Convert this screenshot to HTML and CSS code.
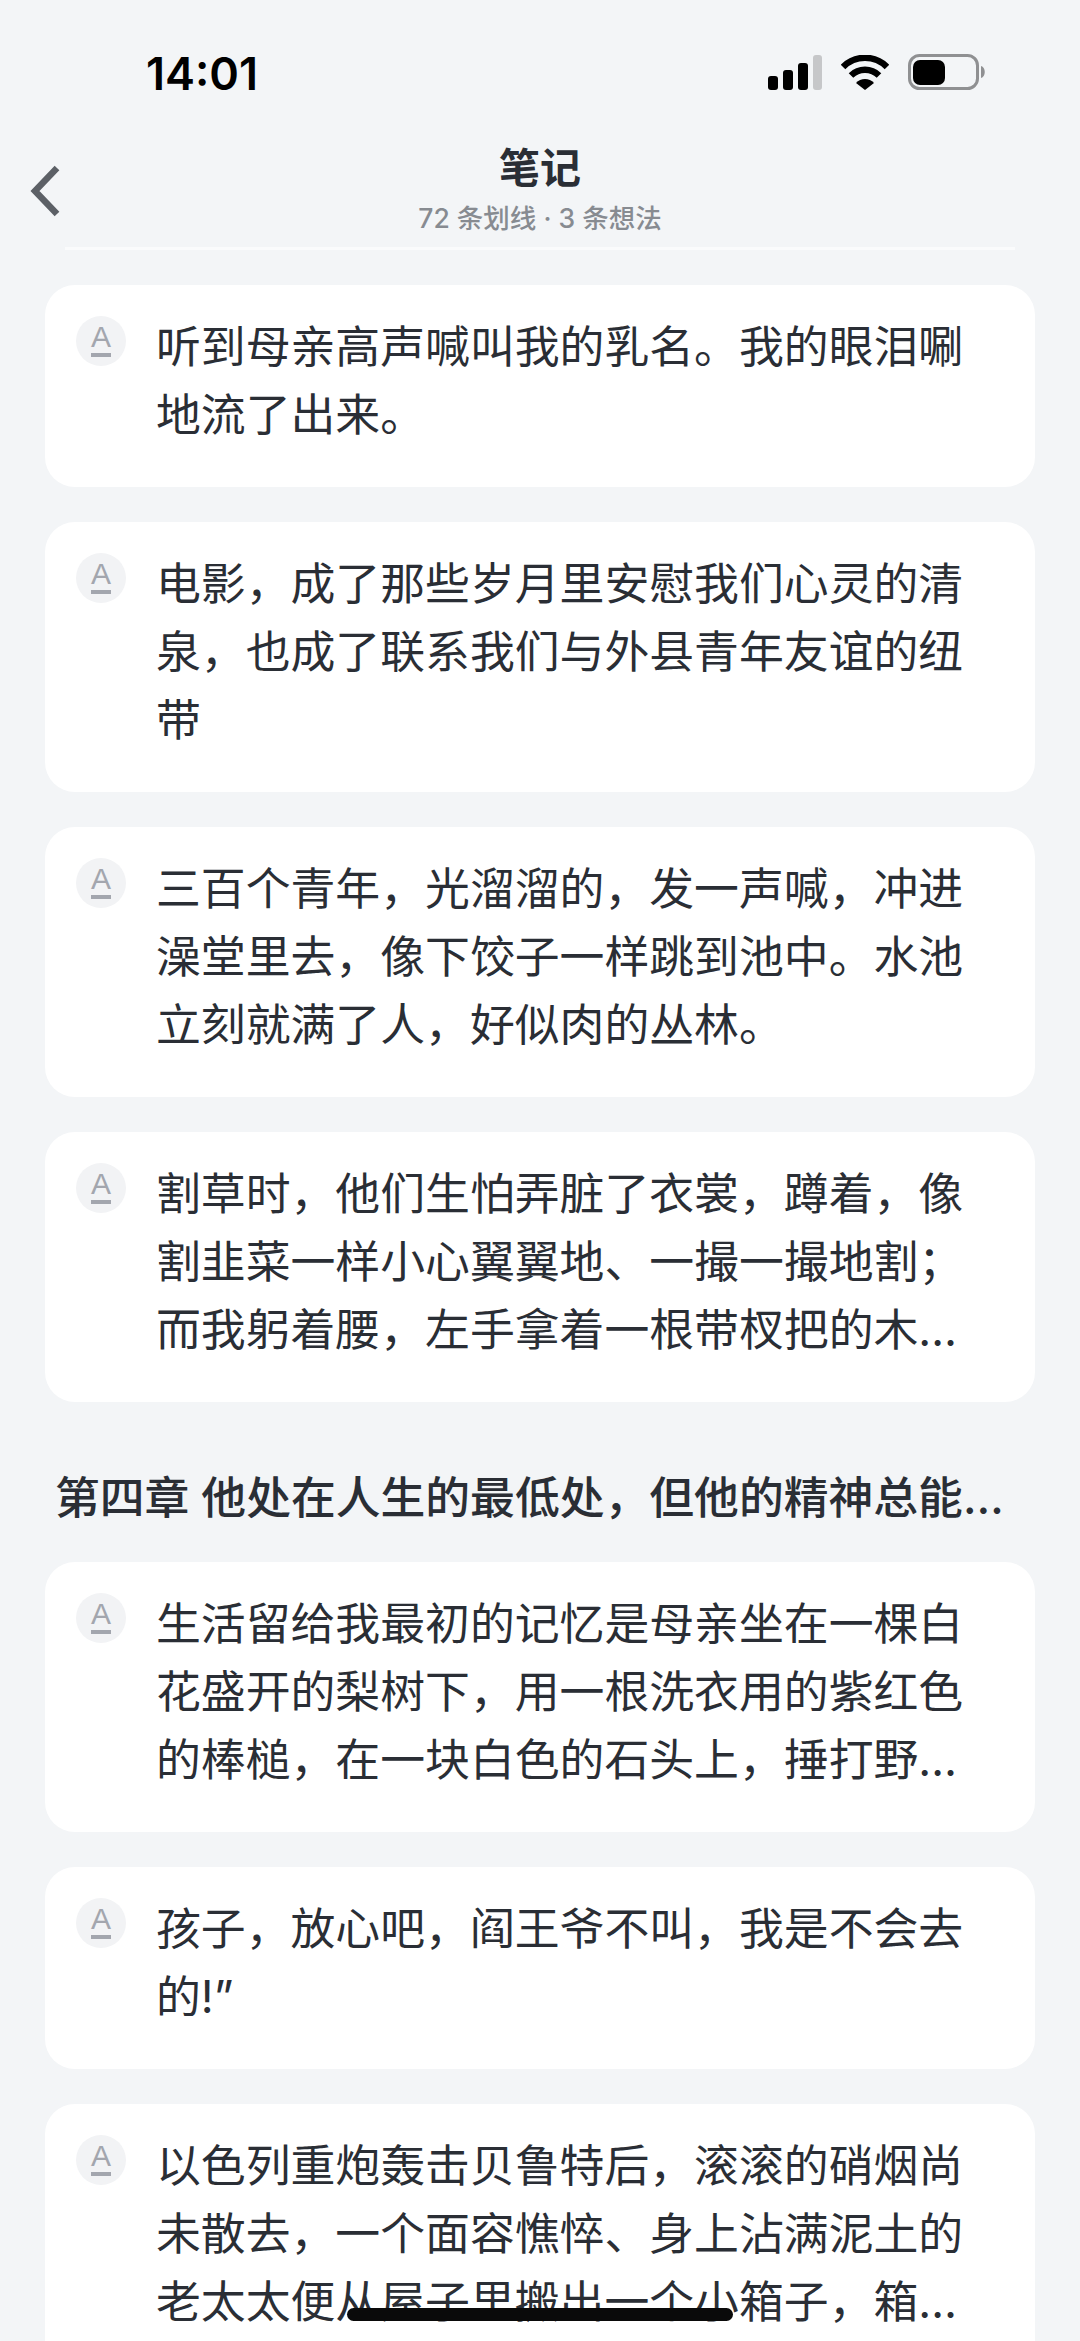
FILE: index.html
```html
<!DOCTYPE html>
<html lang="zh-CN">
<head>
    <meta charset="UTF-8">
    <title>笔记</title>
    <link rel="stylesheet" href="styles.css">
</head>

<body>

    <div class="status-bar">
        <span class="time">14:01</span>
        <div class="status-icons">
            <svg width="54" height="35" viewBox="0 0 54 35">
                <rect x="0" y="21" width="10" height="14" rx="3" fill="#000"/>
                <rect x="15" y="15" width="10" height="20" rx="3" fill="#000"/>
                <rect x="30" y="8" width="10" height="27" rx="3" fill="#000"/>
                <rect x="45" y="0" width="9" height="35" rx="3" fill="#c6c7c9"/>
            </svg>
            <svg width="48" height="35" viewBox="0 0 48 35">
                <path d="M2 12 A31 31 0 0 1 46 12" fill="none" stroke="#000" stroke-width="6.5"/>
                <path d="M10 20.5 A20 20 0 0 1 38 20.5" fill="none" stroke="#000" stroke-width="6.5"/>
                <path d="M15 28 A12 12 0 0 1 33 28 L24 35 Z" fill="#000"/>
            </svg>
            <svg width="78" height="36" viewBox="0 0 78 36">
                <rect x="1.5" y="1.5" width="68" height="33" rx="10" fill="none" stroke="#8f9092" stroke-width="3"/>
                <rect x="5" y="6" width="32" height="25" rx="7" fill="#000"/>
                <path d="M73 12 C78 13 78 23 73 24 Z" fill="#8f9092"/>
            </svg>
        </div>
    </div>

    <header class="nav-bar">
        <svg class="back" width="34" height="52" viewBox="0 0 34 52">
            <path d="M28 3 L6 26 L28 49" fill="none" stroke="#5c6066" stroke-width="6.5"/>
        </svg>
        <h1>笔记</h1>
        <p>72 条划线 · 3 条想法</p>
    </header>

    <main class="notes">
        <div class="note">
            <span class="mark">A</span>
            <p>听到母亲高声喊叫我的乳名。我的眼泪唰地流了出来。</p>
        </div>
        <div class="note">
            <span class="mark">A</span>
            <p>电影，成了那些岁月里安慰我们心灵的清泉，也成了联系我们与外县青年友谊的纽带</p>
        </div>
        <div class="note">
            <span class="mark">A</span>
            <p>三百个青年，光溜溜的，发一声喊，冲进澡堂里去，像下饺子一样跳到池中。水池立刻就满了人，好似肉的丛林。</p>
        </div>
        <div class="note">
            <span class="mark">A</span>
            <p>割草时，他们生怕弄脏了衣裳，蹲着，像割韭菜一样小心翼翼地、一撮一撮地割；而我躬着腰，左手拿着一根带杈把的木…</p>
        </div>

        <h2>第四章 他处在人生的最低处，但他的精神总能…</h2>

        <div class="note">
            <span class="mark">A</span>
            <p>生活留给我最初的记忆是母亲坐在一棵白花盛开的梨树下，用一根洗衣用的紫红色的棒槌，在一块白色的石头上，捶打野…</p>
        </div>
        <div class="note">
            <span class="mark">A</span>
            <p>孩子，放心吧，阎王爷不叫，我是不会去的!”</p>
        </div>
        <div class="note">
            <span class="mark">A</span>
            <p>以色列重炮轰击贝鲁特后，滚滚的硝烟尚未散去，一个面容憔悴、身上沾满泥土的老太太便从屋子里搬出一个小箱子，箱…</p>
        </div>
    </main>

    <div class="home-bar"></div>

</body>
</html>
```

FILE: styles.css
```css
html, body {
    margin: 0;
    padding: 0;
    height: 2341px;
    overflow: hidden;
}
body {
    background-color: #f3f5f7;
    font-family: Inter, "Noto Sans CJK SC", sans-serif;
    color: #2a2e35;
    position: relative;
}
.status-bar {
    height: 108px;
    padding: 46px 94px 0 146px;
    display: flex;
    justify-content: space-between;
    align-items: flex-start;
    box-sizing: border-box;
}
.time {
    font-size: 45px;
    font-weight: 600;
    line-height: 56px;
    color: #000;
}
.status-icons {
    display: flex;
    align-items: center;
    gap: 19px;
    padding-top: 8px;
}
.nav-bar {
    position: relative;
    margin: 0 65px;
    height: 139px;
    border-bottom: 3px solid #fafbfc;
    text-align: center;
}
.back {
    position: absolute;
    left: -36px;
    top: 57px;
}
.nav-bar h1 {
    margin: 0;
    padding-top: 36px;
    font-size: 41px;
    line-height: 48px;
    font-weight: 700;
    color: #2a2e35;
}
.nav-bar p {
    margin: 9px 0 0;
    font-size: 26.5px;
    line-height: 34px;
    font-weight: 500;
    color: #878b91;
}
.notes {
    padding: 35px 45px 0;
}
.note {
    display: flex;
    gap: 30px;
    background-color: #fff;
    border-radius: 30px;
    padding: 31px 36px 38px 31px;
    margin-bottom: 35px;
}
.mark {
    flex: none;
    width: 50px;
    height: 50px;
    border-radius: 50%;
    background-color: #f2f3f5;
    color: #a3a6ae;
    font-family: "Liberation Sans", sans-serif;
    font-size: 30px;
    line-height: 42px;
    text-align: center;
    position: relative;
}
.mark::after {
    content: "";
    position: absolute;
    left: 15px;
    right: 15px;
    top: 37px;
    height: 4px;
    background-color: #a3a6ae;
}
.note p {
    margin: -3px 0 0;
    font-size: 44.85px;
    line-height: 68px;
    color: #2a2e35;
}
.notes h2 {
    margin: 66px 0 0;
    padding-left: 10px;
    height: 94px;
    font-size: 44.8px;
    line-height: 60px;
    font-weight: 500;
    white-space: nowrap;
}
.home-bar {
    position: absolute;
    left: 347px;
    bottom: 20px;
    width: 386px;
    height: 13px;
    border-radius: 7px;
    background-color: #0a0a0a;
}
```
